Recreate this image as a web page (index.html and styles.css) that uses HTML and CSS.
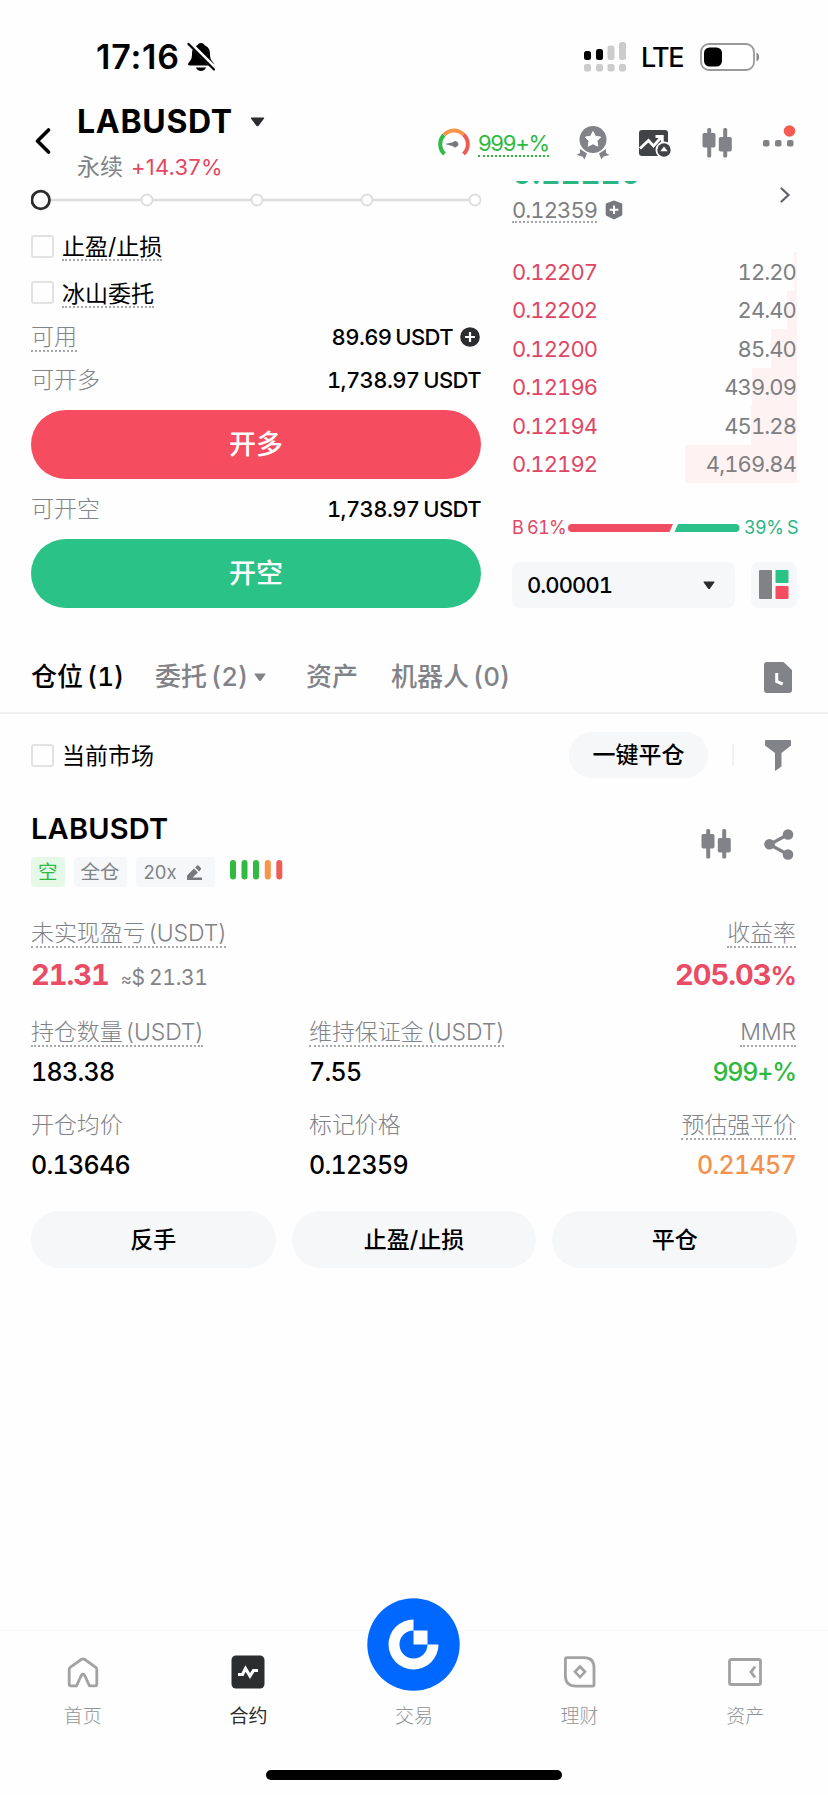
FILE: index.html
```html
<!DOCTYPE html>
<html lang="zh-CN">
<head>
<meta charset="utf-8">
<title>LABUSDT 永续</title>
<link rel="stylesheet" href="styles.css">
</head>
<body>
<svg class="defs" width="0" height="0">
  <symbol id="candles" viewBox="0 0 30 30">
    <rect x="5.2" y="0" width="4" height="29.500" rx="1.600"/><rect x=".5" y="5" width="13" height="14.500" rx="1.800"/>
    <rect x="21.200" y="0" width="4" height="29.500" rx="1.600"/><rect x="16.800" y="9" width="13" height="14.500" rx="1.800"/>
  </symbol>
</svg>
<div class="screen">
  <div class="status">
    <span class="time">17:16</span>
    <svg class="bell" width="28" height="30" viewBox="0 0 28 30"><path d="M14 1c-1.900 0-3.200 1-3.600 2.300C6.600 4.800 5 8 5 12c0 5-1.500 6.500-3.500 9-.9 1.200-.4 2.600 1.200 2.600h22.600c1.600 0 2.100-1.400 1.200-2.600-2-2.500-3.500-4-3.500-9 0-4-1.600-7.200-5.400-8.700C17.200 2 15.900 1 14 1z"/><path d="M9 25.500h10c-.7 2.200-2.700 3.500-5 3.500s-4.300-1.300-5-3.500z"/><path d="M2 .5L28 26.500" stroke="#fff" stroke-width="4.500"/><path d="M1.500 2L27 27.500" stroke="#000" stroke-width="2.300" stroke-linecap="round"/></svg>
    <svg class="signal" width="42" height="30" viewBox="0 0 42 30"><g fill="#000"><rect y="9" width="7" height="9" rx="2.500"/><rect x="12" y="7" width="7" height="11" rx="2.500"/></g><g fill="#ccc"><rect x="23.500" y="3.500" width="7" height="14.500" rx="2.500"/><rect x="35" y="0" width="7" height="18" rx="2.500"/><rect y="22" width="7" height="7.500" rx="2.200"/><rect x="12" y="22" width="7" height="7.500" rx="2.200"/><rect x="23.500" y="22" width="7" height="7.500" rx="2.200"/><rect x="35" y="22" width="7" height="7.500" rx="2.200"/></g></svg>
    <span class="lte">LTE</span>
    <svg class="battery" width="60" height="28" viewBox="0 0 60 28"><rect x="1" y="1" width="53" height="26" rx="8" fill="#fff" stroke="#999" stroke-width="1.800"/><rect x="4" y="4.500" width="18" height="19" rx="5.500" fill="#000"/><path d="M56.500 9.500c3.500 1.500 3.500 7.500 0 9z" fill="#888"/></svg>
  </div>
  <header class="header">
    <svg class="back" width="16" height="26" viewBox="0 0 16 26"><path d="M13.500 2L2.500 13l11 11" fill="none" stroke="#000" stroke-width="3.600" stroke-linecap="round" stroke-linejoin="round"/></svg>
    <div class="pair">
      <div class="pair-top"><b>LABUSDT</b><svg width="15" height="10" viewBox="0 0 15 10"><path d="M1.500.5h12q1.200.2.400 1.200L8.600 8.700q-1.100 1.300-2.200 0L1.100 1.700Q.3.700 1.500.5z" fill="#2b2d30"/></svg></div>
      <div class="pair-sub"><span>永续</span><span class="chg">+14.37%</span></div>
    </div>
    <div class="tools">
      <svg class="gauge" width="32" height="28" viewBox="0 0 32 28"><g fill="none" stroke-width="4"><path d="M6.500 26A13.200 13.200 0 0 1 6 7" stroke="#2fb945"/><path d="M6 7a13.200 13.200 0 0 1 19.500-.5" stroke="#f79447"/><path d="M25.500 6.500A13.200 13.200 0 0 1 25.500 26" stroke="#ef5b55"/></g><path d="M7 16l8-1.800a3 3 0 1 1 0 4z" fill="#77797c"/></svg>
      <span class="mmr dotted">999+%</span>
      <svg class="medal" width="34" height="34" viewBox="0 0 34 34"><circle cx="17" cy="13.500" r="13.500" fill="#818388"/><path d="M17 5.500l2.400 4.800 5.300.8-3.800 3.800.9 5.300-4.800-2.500-4.800 2.500.9-5.300-3.800-3.800 5.300-.8z" fill="#fff" stroke="#fff" stroke-linejoin="round"/><path d="M4 23l7 4.500-2.500 6-2-3L.500 29l3.500-2zM30 23l-7 4.500 2.500 6 2-3 6-1.500-3.500-2z" fill="#818388"/></svg>
      <svg class="chart" width="33" height="28" viewBox="0 0 33 28"><rect width="29" height="26" rx="3" fill="#424347"/><path d="M1 18.500l8.500-8 5 5.500 8-9M16.500 6.500h6.800v5.500" fill="none" stroke="#fff" stroke-width="2.800"/><circle cx="25" cy="20" r="8.500" fill="#fff"/><circle cx="25" cy="20" r="6.700" fill="#424347"/><path d="M25 16.500l3.700 4.700h-7.400z" fill="#fff"/></svg>
      <svg class="candles" width="30" height="30"><use href="#candles"/></svg>
      <svg class="more" width="34" height="24" viewBox="0 0 34 24"><g fill="#818388"><rect y="15" width="6.500" height="6.500" rx="1.800"/><rect x="12" y="15" width="6.500" height="6.500" rx="1.800"/><rect x="24" y="15" width="6.500" height="6.500" rx="1.800"/></g><circle cx="26.500" cy="6" r="5.800" fill="#f55b50"/></svg>
    </div>
  </header>

  <main class="trade">
    <section class="form">
      <svg class="slider" width="450" height="22" viewBox="0 0 450 22"><path d="M20 11h424" stroke="#dedede" stroke-width="2.400"/><g fill="#fff" stroke="#dedede" stroke-width="2"><circle cx="116" cy="11" r="5.500"/><circle cx="226" cy="11" r="5.500"/><circle cx="336" cy="11" r="5.500"/><circle cx="444" cy="11" r="5.500"/></g><circle cx="9.700" cy="11" r="8.800" fill="#fff" stroke="#2c2c2e" stroke-width="2.800"/></svg>
      <label class="check"><i></i><span class="dotted">止盈/止损</span></label>
      <label class="check"><i></i><span class="dotted">冰山委托</span></label>
      <div class="line"><span class="lab dotted">可用</span><span class="val">89.69 USDT<svg class="plus" width="20" height="20" viewBox="0 0 20 20"><circle cx="10" cy="10" r="9.800" fill="#2c2d30"/><path d="M10 5v10M5 10h10" stroke="#fff" stroke-width="2.200"/></svg></span></div>
      <div class="line low"><span class="lab">可开多</span><span class="val">1,738.97 USDT</span></div>
      <button class="big long">开多</button>
      <div class="line tall"><span class="lab">可开空</span><span class="val">1,738.97 USDT</span></div>
      <button class="big short">开空</button>
    </section>
    <section class="book">
      <div class="last"><span>0.12220</span></div>
      <div class="mark">
        <span class="dotted">0.12359</span>
        <svg width="18" height="20" viewBox="0 0 18 20"><path d="M9 .5l7.500 2.800q.8.400.8 1.200v10q0 .8-.8 1.200L9 19.500l-7.500-3.800q-.8-.4-.8-1.200v-10q0-.8.8-1.200z" fill="#75787c"/><path d="M9 5.500v8.600M4.700 9.800h8.600" stroke="#fff" stroke-width="2"/></svg>
        <svg class="arrow" width="11" height="16" viewBox="0 0 11 16"><path d="M1.500 1.500L8.500 8l-7 6.500" fill="none" stroke="#606266" stroke-width="2.200" stroke-linecap="round"/></svg>
      </div>
      <div class="asks">
        <div class="ask"><span>0.12207</span><span>12.20</span><i style="width:3px"></i></div>
        <div class="ask"><span>0.12202</span><span>24.40</span><i style="width:10px"></i></div>
        <div class="ask"><span>0.12200</span><span>85.40</span><i style="width:26px"></i></div>
        <div class="ask"><span>0.12196</span><span>439.09</span><i style="width:45px"></i></div>
        <div class="ask"><span>0.12194</span><span>451.28</span><i style="width:46px"></i></div>
        <div class="ask"><span>0.12192</span><span>4,169.84</span><i style="width:112px"></i></div>
      </div>
      <div class="ratio"><span class="buy">B 61%</span><svg width="172" height="8" viewBox="0 0 172 8"><path d="M4 0h101l-3.500 8H4a4 4 0 0 1 0-8z" fill="#ef4d60"/><path d="M110 0h57.500a4 4 0 0 1 0 8H106.500z" fill="#2bc08a"/></svg><span class="sell">39% S</span></div>
      <div class="pick">
        <div class="select"><span>0.00001</span><svg width="12" height="9" viewBox="0 0 12 9"><path d="M1 .5h10q1 .2.300 1L7 7.600q-1 1-2 0L.7 1.500Q0 .7 1 .5z" fill="#2b2d30"/></svg></div>
        <div class="depth"><svg width="30" height="30" viewBox="0 0 30 30"><rect width="13" height="29" rx="1" fill="#808286"/><rect x="16.500" width="13" height="13" rx="1" fill="#2bc287"/><rect x="16.500" y="16" width="13" height="13" rx="1" fill="#f64c5f"/></svg></div>
      </div>
    </section>
  </main>

  <nav class="tabs">
    <span class="on">仓位 (1)</span>
    <span class="t2">委托 (2)<svg width="12" height="9" viewBox="0 0 12 9"><path d="M1 .5h10q1 .2.300 1L7 7.600q-1 1-2 0L.7 1.500Q0 .7 1 .5z" fill="#818388"/></svg></span>
    <span class="t3">资产</span>
    <span class="t4">机器人 (0)</span>
    <svg class="doc" width="28" height="31" viewBox="0 0 28 31"><path d="M3 0h16.500L28 8v20q0 3-3 3H3q-3 0-3-3V3q0-3 3-3z" fill="#818388"/><path d="M12.700 11v8.500l6 2.500" fill="none" stroke="#fff" stroke-width="3"/></svg>
  </nav>

  <div class="filter">
    <label class="check"><i></i><span>当前市场</span></label>
    <button class="closeall">一键平仓</button>
    <i class="sep"></i>
    <svg width="26" height="31" viewBox="0 0 26 31"><path d="M1 0h24q1 0 1 1v4.500L16.500 13v13.500L10 31V13L0 5.500V1q0-1 1-1z" fill="#818388"/></svg>
  </div>

  <article class="position">
    <div class="phead">
      <div>
        <h2>LABUSDT</h2>
        <div class="tags"><span class="tag green">空</span><span class="tag">全仓</span><span class="tag lev">20x<svg width="15" height="15" viewBox="0 0 15 15"><path d="M0 10.500L7 3.500l4 4-5.500 5H15v2.500H0zM8.200 2.500L10 .5q.8-.6 1.500 0L13.800 3q.6.700 0 1.400L12.200 6.400z" fill="#77797d"/></svg></span>
        <svg class="risk" width="53" height="20" viewBox="0 0 53 20"><g fill="#32b93f"><rect width="6" height="19.500" rx="3"/><rect x="11.500" width="6" height="19.500" rx="3"/><rect x="23" width="6" height="19.500" rx="3"/></g><rect x="34.800" width="6" height="19.500" rx="3" fill="#f79447"/><rect x="46.300" width="6" height="19.500" rx="3" fill="#ef5b55"/></svg></div>
      </div>
      <div class="pact">
        <svg width="30" height="30" class="gray"><use href="#candles"/></svg>
        <svg width="30" height="31" viewBox="0 0 30 31"><path d="M24 5.500L5.500 15.500 24 25.500" fill="none" stroke="#818388" stroke-width="3.200"/><g fill="#818388"><circle cx="24" cy="5.500" r="5.300"/><circle cx="5.500" cy="15.300" r="5.300"/><circle cx="24" cy="25.500" r="5.300"/></g></svg>
      </div>
    </div>
    <div class="stats">
      <div class="stat pnl"><span class="lab dotted">未实现盈亏 (USDT)</span><span class="num red">21.31<small><em>≈</em>$ 21.31</small></span></div>
      <div class="stat roi"><span class="lab dotted">收益率</span><span class="num red">205.03<span class="pct">%</span></span></div>
      <div class="stat"><span class="lab dotted">持仓数量 (USDT)</span><span class="num">183.38</span></div>
      <div class="stat"><span class="lab dotted">维持保证金 (USDT)</span><span class="num">7.55</span></div>
      <div class="stat r"><span class="lab dotted">MMR</span><span class="num g">999+%</span></div>
      <div class="stat"><span class="lab">开仓均价</span><span class="num">0.13646</span></div>
      <div class="stat"><span class="lab">标记价格</span><span class="num">0.12359</span></div>
      <div class="stat r"><span class="lab dotted">预估强平价</span><span class="num o">0.21457</span></div>
    </div>
    <div class="acts"><button>反手</button><button>止盈/止损</button><button>平仓</button></div>
  </article>

  <footer class="bottom">
    <div class="items">
      <a><svg width="34" height="34" viewBox="0 0 34 34"><path d="M3.200 14.500q0-1.500 1.300-2.400L15.200 4.500q1.800-1.200 3.600 0l10.700 7.600q1.300.9 1.300 2.400V29q0 1.800-1.800 1.800h-5.500L19 21q-2-3.500-4 0l-4.500 9.800H5q-1.800 0-1.800-1.800z" fill="none" stroke="#a2a2a2" stroke-width="2.800" stroke-linejoin="round"/></svg><span>首页</span></a>
      <a class="on"><svg width="34" height="34" viewBox="0 0 34 34"><rect x=".5" y=".5" width="33" height="33" rx="4.500" fill="#2b2d2f"/><path d="M7 19.500h4.500l3-6 4.500 7.500 3.500-5.500h4.500" fill="none" stroke="#fff" stroke-width="3.200"/></svg><span>合约</span></a>
      <a class="mid"><svg class="logo" width="93" height="93" viewBox="0 0 93 93"><circle cx="46.500" cy="46.500" r="46.200" fill="#0068ff"/><path d="M46.500 21.500a25 25 0 1 0 25 25H60.500a14 14 0 1 1-14-14z" fill="#fff"/><path d="M46.500 32.500h14v14h-14z" fill="#fff"/></svg><span>交易</span></a>
      <a><svg width="34" height="34" viewBox="0 0 34 34"><path d="M4 2.600h17q10 0 10 10v17q0 1.600-1.600 1.600H13q-10.600 0-10.600-10.600V4.200Q2.400 2.600 4 2.600z" fill="none" stroke="#a2a2a2" stroke-width="2.800"/><path d="M17 11.500l5 5.300-5 5.300-5-5.300z" fill="none" stroke="#a2a2a2" stroke-width="2.600"/></svg><span>理财</span></a>
      <a><svg width="34" height="34" viewBox="0 0 34 34"><rect x="1.500" y="4.500" width="31" height="25" rx="1.800" fill="none" stroke="#a2a2a2" stroke-width="2.800"/><path d="M27 11.500l-4 5.500 4 5.500" fill="none" stroke="#a2a2a2" stroke-width="2.800"/></svg><span>资产</span></a>
    </div>
    <i class="homebar"></i>
  </footer>
</div>
</body>
</html>
```
FILE: styles.css
```css
* { box-sizing: border-box; }
body {
  margin: 0;
  background: #fefefe;
  color: #000;
  font-family: Inter, "Noto Sans CJK SC", sans-serif;
  font-size: 22px;
  line-height: 26px;
}
button { border: 0; padding: 0; font: inherit; color: inherit; }
svg { display: block; flex: none; }
.defs { position: absolute; }
.screen { width: 828px; height: 1795px; display: flex; flex-direction: column; overflow: hidden; }
.dotted { border-bottom: 2px dotted #a5a7aa; margin-bottom: -2px; }

.status { height: 90px; padding: 24px 68px 0 96px; display: flex; align-items: center; }
.time { font-size: 34px; font-weight: 600; letter-spacing: .8px; width: 91px; white-space: nowrap; }
.signal { margin-left: auto; }
.lte { margin-left: 15px; padding-top: 2px; font-size: 27px; font-weight: 500; letter-spacing: -1.600px; width: 43px; }
.battery { margin-left: 16px; }

.header { height: 90px; padding: 0 32px 0 35px; display: flex; }
.back { margin-top: 38px; }
.pair { margin-left: 26px; padding-top: 16px; }
.pair-top { display: flex; align-items: center; gap: 17px; height: 31px; font-size: 32px; }
.pair-top b { font-weight: 700; letter-spacing: .7px; }
.pair-sub { display: flex; gap: 8px; margin-top: 17px; height: 26px; font-size: 23px; color: #818388; align-items: center; }
.chg { font-size: 22px; color: #e44762; letter-spacing: .2px; }
.tools { margin-left: auto; display: flex; align-items: flex-start; fill: #818388; }
.gauge { margin-top: 38px; }
.mmr { margin: 42px 0 0 8px; color: #2fb93f; line-height: 23px; border-color: #2fb93f; letter-spacing: -1.200px; }
.medal { margin: 36px 0 0 27px; }
.chart { margin: 40px 0 0 29px; }
.candles { margin: 38px 0 0 30px; }
.more { margin: 35px -1px 0 31px; }
.gray { fill: #818388; }

.trade { height: 450px; padding: 0 31px; display: flex; justify-content: space-between; }
.form { width: 450px; display: flex; flex-direction: column; }
.slider { margin: 9px 0 12px; }
.check { display: flex; align-items: center; gap: 8px; height: 46.500px; font-size: 23px; }
.check span { padding-top: 2px; line-height: 24px; }
.check i { width: 23px; height: 23px; border: 2px solid #e2e2e2; border-radius: 3px; }
.line { display: flex; align-items: center; justify-content: space-between; height: 42px; }
.line.low { padding-top: 2px; }
.line.tall { height: 60px; }
.lab { color: #818388; font-size: 23px; font-weight: 300; }
.val { font-weight: 500; font-size: 22px; display: flex; align-items: center; white-space: nowrap; font-feature-settings: "tnum"; letter-spacing: -.600px; word-spacing: -1.500px; }
.plus { margin-left: 7px; margin-right: 1px; }
.big { height: 69px; border-radius: 35px; color: #fff; font-size: 27px; font-weight: 500; padding-top: 1px; }
.long { background: #f64c5f; margin-top: 10px; }
.short { background: #2bc287; }

.book { width: 285px; display: flex; flex-direction: column; font-feature-settings: "tnum"; }
.last { margin-top: 1px; height: 5px; overflow: hidden; display: flex; align-items: flex-end; font-size: 31px; font-weight: 600; color: #2bb585; }
.mark { display: flex; align-items: center; height: 48px; color: #7d7f82; padding-right: 6px; }
.mark .dotted { line-height: 22px; margin-right: 8px; letter-spacing: -.900px; }
.mark .arrow { margin: -31px 0 0 auto; }
.asks { margin-top: 18px; }
.ask { position: relative; display: flex; justify-content: space-between; align-items: center; height: 38.500px; color: #7d7f82; padding-right: 1px; }
.ask span { position: relative; z-index: 1; letter-spacing: -.900px; padding-top: 1px; }
.ask span:first-child { color: #de4764; }
.ask i { position: absolute; right: 0; top: 0; bottom: 0; background: #fff2f2; }
.ratio { display: flex; align-items: center; height: 24px; margin-top: 33px; font-size: 18px; padding-right: 1px; white-space: nowrap; justify-content: space-between; }
.ratio span { letter-spacing: -.600px; word-spacing: -.500px; width: 52px; }
.ratio .sell { text-align: right; }
.buy { color: #e44762; }
.sell { color: #2bb585; }
.pick { display: flex; justify-content: space-between; margin-top: 22px; }
.select { width: 223px; height: 46px; background: #f5f7f9; border-radius: 8px; padding: 0 20px 0 15px; display: flex; justify-content: space-between; align-items: center; font-weight: 500; letter-spacing: -.900px; }
.depth { width: 46px; height: 46px; background: #f5f7f9; border-radius: 8px; display: grid; place-items: center; }

.tabs { height: 84px; border-bottom: 2px solid #f0f0f1; padding: 12px 36px 0 31px; display: flex; align-items: center; font-size: 26px; color: #818388; font-weight: 500; white-space: nowrap; word-spacing: -3px; font-feature-settings: "tnum"; }
.tabs .on { color: #000; width: 124px; }
.tabs .t2 { display: flex; align-items: center; gap: 6px; width: 151px; }
.tabs .t3 { width: 85px; }
.doc { margin-left: auto; }

.filter { height: 82px; padding: 0 37px 0 31px; display: flex; align-items: center; }
.closeall { margin-left: auto; width: 139px; height: 46px; border-radius: 23px; background: #f5f7f9; font-size: 23px; font-weight: 500; }
.sep { width: 2px; height: 22px; background: #eff0f1; margin: 0 31px 0 24px; }

.position { padding: 0 31px; }
.phead { display: flex; justify-content: space-between; height: 125px; padding-top: 18px; }
h2 { margin: 0; font-size: 29px; line-height: 30px; font-weight: 600; letter-spacing: .2px; }
.tags { display: flex; margin-top: 13px; gap: 9px; align-items: center; }
.tag { height: 30px; padding: 0 7px; background: #f5f7f9; border-radius: 4px; font-size: 19.500px; line-height: 30px; color: #818388; display: flex; align-items: center; }
.tag.green { background: #e6f9e9; color: #2fb93f; }
.tag.lev { padding: 0 13px 0 8px; justify-content: space-between; width: 79px; font-size: 18.500px; }
.risk { margin: -5px 0 0 6px; }
.pact { display: flex; gap: 33px; padding: 15px 3px 0 0; }
.stats { display: grid; grid-template-columns: 278px 278px 1fr; grid-template-rows: 99px 93px 93px; }
.stat { display: flex; flex-direction: column; align-items: flex-start; white-space: nowrap; }
.stat .lab { line-height: 25px; font-size: 23px; letter-spacing: -.100px; word-spacing: -3px; }
.pnl { grid-column: span 2; }
.roi, .r { align-items: flex-end; padding-right: 1px; }
.num { font-size: 25px; font-weight: 500; line-height: 30px; margin-top: 12px; font-feature-settings: "tnum"; letter-spacing: -.700px; }
.num.red { font-size: 29px; font-weight: 700; color: #e94c64; margin-top: 14px; letter-spacing: -1px; }
.num.red .pct { font-size: 26px; letter-spacing: -1px; }
.num small { font-size: 21px; font-weight: 400; color: #818388; margin-left: 12px; letter-spacing: -.300px; word-spacing: -1px; }
.num em { font-style: normal; font-size: 17px; }
.num.g { color: #2fb93f; letter-spacing: -1.200px; }
.o { color: #f3914d; }
.acts { display: grid; grid-template-columns: repeat(3, 1fr); gap: 16px; margin-top: 5px; }
.acts button { height: 57px; border-radius: 29px; background: #f5f7f9; font-size: 23px; font-weight: 500; }

.bottom { margin-top: auto; height: 165px; border-top: 1px solid #fafafa; display: flex; flex-direction: column; align-items: center; }
.items { display: grid; grid-template-columns: repeat(5, 1fr); width: 828px; height: 139px; padding-top: 24px; }
.items a { display: flex; flex-direction: column; align-items: center; font-size: 19px; color: #929498; font-weight: 300; }
.items span { margin-top: 15px; }
.items .on { color: #2b2d2f; font-weight: 400; }
.logo { margin-top: -57px; }
.items .mid span { margin-top: 13px; }
.homebar { width: 296px; height: 10px; border-radius: 5px; background: #000; }
```
